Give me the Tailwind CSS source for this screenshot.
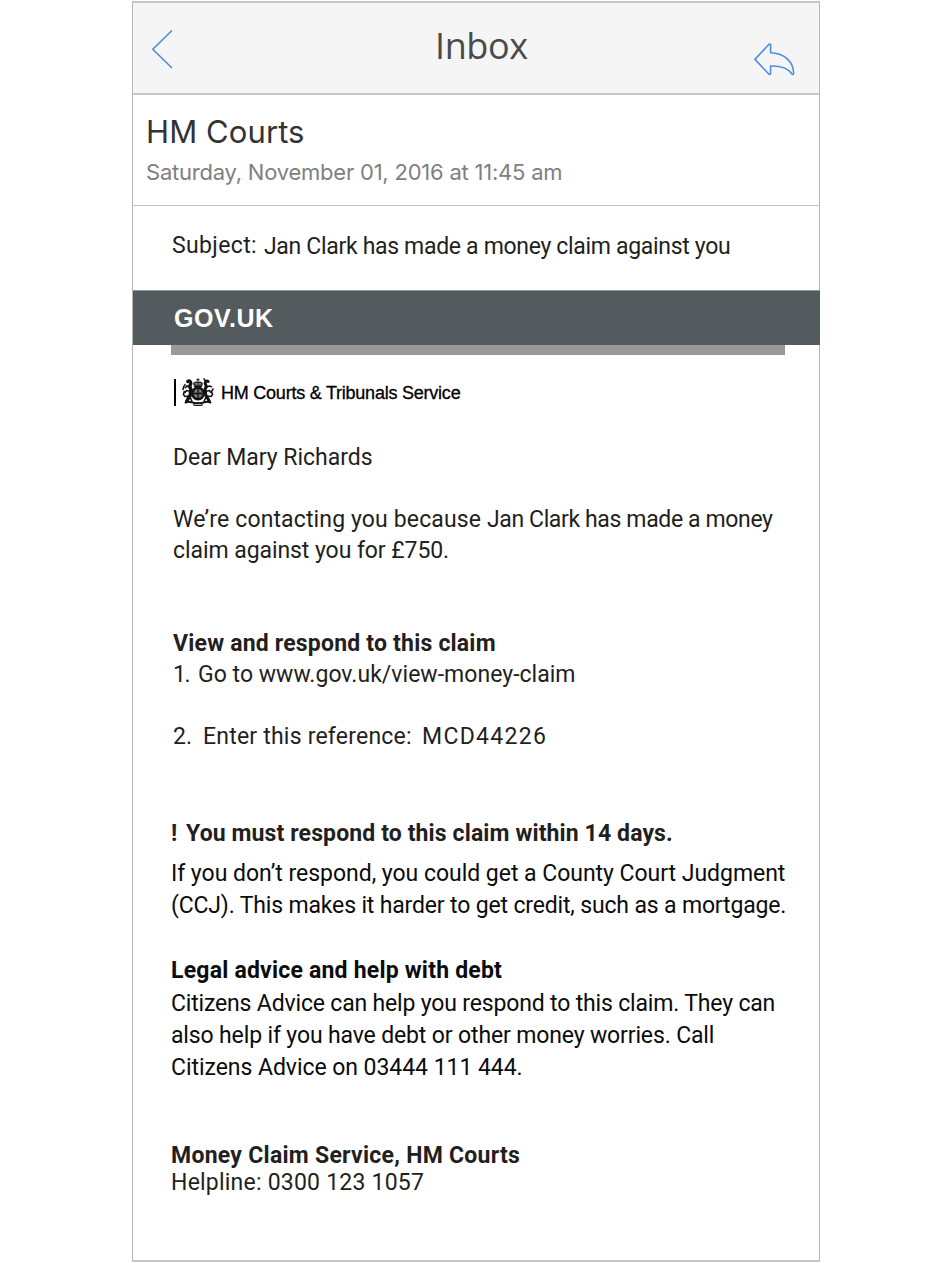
<!DOCTYPE html>
<html lang="en">
<head>
<meta charset="utf-8">
<title>Inbox</title>
<script src="https://cdn.jsdelivr.net/npm/@tailwindcss/browser@4"></script>
</head>
<body class="bg-white font-[Roboto,sans-serif] text-[#231f20]">
<main class="ml-[132px] mt-px w-[688px] h-[1261px] border-x border-y-2 border-x-[#b5b5b5] border-y-[#c6c8c6] bg-white whitespace-nowrap flex flex-col">
  <header class="h-[92px] shrink-0 bg-[#f5f5f5] border-b-2 border-[#c8c8c8] flex">
    <svg class="ml-[18px] mt-[26px] w-[22px] h-[40px]" viewBox="0 0 22 40" fill="none" stroke="#4a90e2" stroke-width="1.6"><path d="M21 1.500 1.800 20.300 21 39"/></svg>
    <h1 class="ml-[262px] mt-[22px] font-['Open_Sans',sans-serif] text-[36px] leading-[42px] tracking-[-0.4px] text-[#4a4a4a]">Inbox</h1>
    <svg class="ml-auto mr-[22px] mt-[39px] w-[44px] h-[36px]" viewBox="0 0 44 36" fill="none" stroke="#4a90e2" stroke-width="1.6" stroke-linejoin="round"><path d="M17.600 2.600v8.200C32 11.200 40.600 20.500 40.600 31.400C40.600 32.600 39.500 32.600 38.800 31.700C34.500 25.600 27 23.700 17.600 24v7.600C17.600 32.600 16.500 32.800 15.800 32L1.900 17.400 15.800 2.500C16.500 1.800 17.600 1.900 17.600 2.600Z"/></svg>
  </header>
  <section class="h-[111px] shrink-0 border-b border-[#c4c4c4] pl-[14px] pt-[17px] font-[Inter,sans-serif]">
    <h2 class="-ml-px text-[31px] leading-[40px] tracking-[0.1px] text-[#333]">HM Courts</h2>
    <p class="-ml-px mt-[4px] text-[22px] leading-[32px] tracking-[-0.22px] text-[#808080]">Saturday, November 01, 2016 at 11:45 am</p>
  </section>
  <section class="h-[84px] shrink-0 pl-[39px] pt-[24px] flex text-[23px] leading-8">
    <span class="w-[92px] tracking-[0.36px]">Subject:</span>
    <span class="mt-px tracking-[-0.32px]">Jan Clark has made a money claim against you</span>
  </section>
  <div class="h-[55px] shrink-0 -mr-px bg-[#545b5e] border-t border-[#8e9694] pl-[41px] pt-[11px] font-['Liberation_Sans',sans-serif] font-bold text-[25px] leading-8 tracking-[0.55px] text-white">GOV.UK</div>
  <div class="h-[10px] shrink-0 ml-[38px] w-[614px] bg-[#999]"></div>
  <div class="mt-[23px] ml-[41px] h-[28px] flex items-center text-black">
    <span class="w-[2px] h-[27px] bg-black"></span>
    <svg class="ml-[6px] w-[32px] h-[28px]" viewBox="0 0 32 28" fill="none" stroke="#111" stroke-linecap="round">
      <path d="M16 .6v3M14.800 1.800h2.400" stroke-width="1"/>
      <path d="M12.200 7.200C10.600 4.600 13.800 3.200 16 4.800 18.200 3.200 21.400 4.600 19.800 7.200Z" fill="#777" stroke-width="1.1"/>
      <path d="M12.500 8.400h7" stroke-width="1.500"/>
      <circle cx="16" cy="15.500" r="5.800" fill="#555" stroke-width="2.200"/>
      <path d="M16 10.500v10M12 15.500h8" stroke="#111" stroke-width="1"/>
      <path d="M13.500 13h1M17.700 13h1M13.500 18h1M17.700 18h1" stroke="#bbb" stroke-width="1"/>
      <path d="M5.800 3.500C7.500 2.500 9 3.500 8.800 5.600L7.600 8.500 9 11.500 8 18 6.200 20.500 4.600 23.500" stroke-width="3.400"/>
      <path d="M9 9.500 4.800 8 3.300 9.800M9 13.500 4.500 12.500 3 14.500M7 18 3 18.500 1.400 16.500 2.200 13.500M1 11.500 1.600 9 3 6.500M8.500 20 10 23.500" stroke-width="1.500"/>
      <path d="M26.200 3.500C24.500 2.500 23 3.500 23.200 5.600L24.400 8.500 23 11.500 24 18 25.800 20.500 27.400 23.500" stroke-width="3"/>
      <path d="M23 2.500 22 .800M23 9.500 27.500 8 29.500 8.800M23 13.500 27.500 12.500 29 14.500M25 18 29 18.500 30.600 16.500 29.500 13.500 31 11M23.500 20 22 23.500" stroke-width="1.500"/>
      <path d="M3.500 24.500C8 21.800 10.500 26 16 25 21.500 26 24 21.800 28.500 24.500" stroke-width="1.900"/>
      <path d="M11.500 26.800C14.500 27.500 17.500 27.500 20.500 26.800" stroke-width="1.200"/>
    </svg>
    <span class="ml-[7px] mt-px font-['Liberation_Sans',sans-serif] text-[18px] leading-7 tracking-[-0.23px] [-webkit-text-stroke:0.3px_#000]">HM Courts &amp; Tribunals Service</span>
  </div>
  <section class="mt-[36px] pl-[40px] text-[23px] leading-[31px]">
    <p class="tracking-[-0.02px]">Dear Mary Richards</p>
    <p class="mt-[31px]"><span class="tracking-[0.13px]">We’re contacting you because </span><span class="tracking-[-0.37px]">Jan Clark has made a money</span></p>
    <p class="tracking-[-0.07px]">claim against you for £750.</p>
    <h3 class="mt-[62px] font-bold tracking-[0.2px]">View and respond to this claim</h3>
    <p class="flex"><span class="w-[25px] tracking-[-1.5px]">1.</span><span class="tracking-[0.03px]">Go to www.gov.uk/view-money-claim</span></p>
    <p class="mt-[31px] flex"><span class="w-[30px]">2.</span><span class="w-[219px] tracking-[0.21px]">Enter this reference:</span><span class="tracking-[1.3px]">MCD44226</span></p>
  </section>
  <h3 class="mt-[66px] pl-[38px] flex text-[23px] leading-8 font-bold"><span class="w-[15px]">!</span><span class="tracking-[0.12px]">You must respond to this claim within 14 days.</span></h3>
  <section class="mt-[8px] pl-[38px] text-[23px] leading-[32.4px] text-[#0b0c0c]">
    <p class="tracking-[-0.03px]">If you don’t respond, you could get a County Court Judgment</p>
    <p class="tracking-[-0.16px]">(CCJ). This makes it harder to get credit, such as a mortgage.</p>
    <h3 class="mt-[32.4px] font-bold tracking-[0.21px]">Legal advice and help with debt</h3>
    <p class="tracking-[-0.17px]">Citizens Advice can help you respond to this claim. They can</p>
    <p class="tracking-[-0.14px]">also help if you have debt or other money worries. Call</p>
    <p class="tracking-[-0.05px]">Citizens Advice on 03444 111 444.</p>
  </section>
  <footer class="mt-[57px] pl-[38px] text-[23px] leading-[27px]">
    <p class="font-bold tracking-[0.27px]">Money Claim Service, HM Courts</p>
    <p class="tracking-[0.22px]">Helpline: 0300 123 1057</p>
  </footer>
</main>
</body>
</html>
